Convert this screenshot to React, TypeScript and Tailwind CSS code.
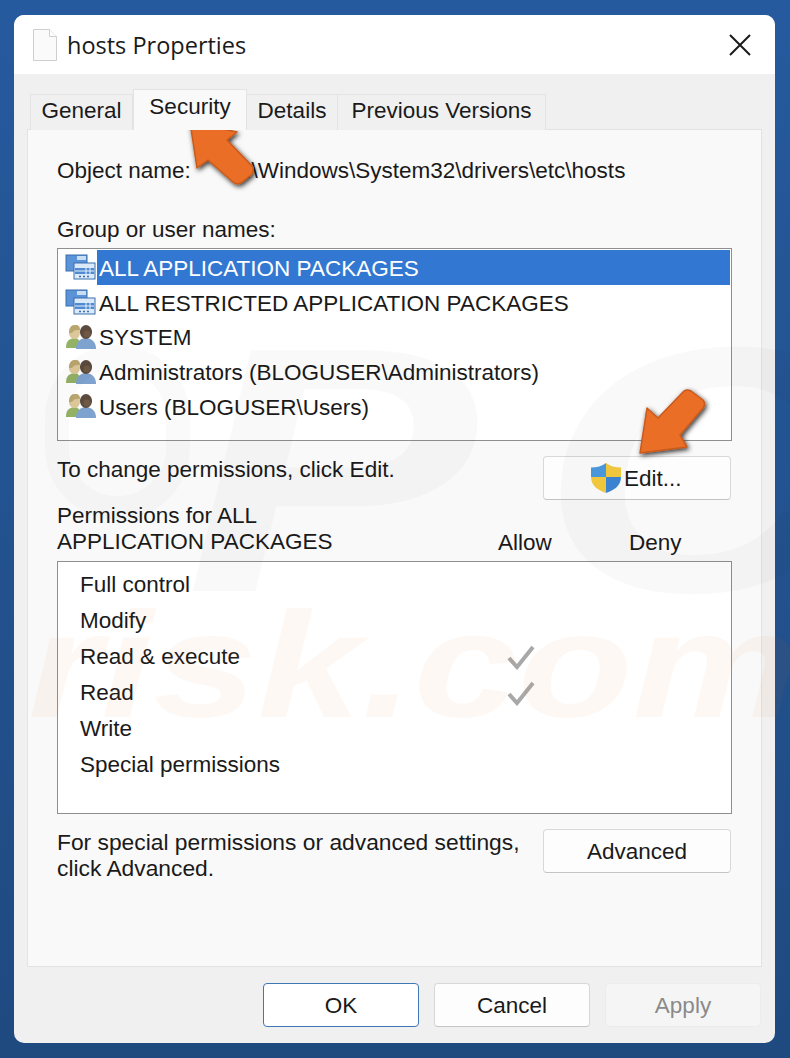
const principals = [
  { name: 'ALL APPLICATION PACKAGES', icon: 'package', selected: true },
  { name: 'ALL RESTRICTED APPLICATION PACKAGES', icon: 'package' },
  { name: 'SYSTEM', icon: 'users' },
  { name: 'Administrators (BLOGUSER\\Administrators)', icon: 'users' },
  { name: 'Users (BLOGUSER\\Users)', icon: 'users' },
];

const permissions = [
  { name: 'Full control' },
  { name: 'Modify' },
  { name: 'Read & execute', allowed: true },
  { name: 'Read', allowed: true },
  { name: 'Write' },
  { name: 'Special permissions' },
];

function PackageIcon() {
  return (
    <svg width="32" height="26" viewBox="0 0 32 26" className="shrink-0">
      <rect x="1" y="1" width="21" height="16" fill="#5b93d8" stroke="#3b6fae" />
      <rect x="12" y="2" width="9" height="4" fill="#c9def5" />
      <rect x="9" y="9" width="21" height="16" fill="#dbe9f8" stroke="#3b6fae" />
      <rect x="10" y="14" width="19" height="6" fill="#4f8ad2" />
      <path d="M21 14v6M25 14v6M10 17h19" stroke="#e8f1fb" strokeWidth="1" />
      <path d="M14 22.5h2M18 22.5h2M22 22.5h2" stroke="#3b6fae" strokeWidth="1.5" />
    </svg>
  );
}

function UsersIcon() {
  return (
    <svg width="32" height="26" viewBox="0 0 32 26" className="shrink-0">
      <path d="M1 24c0-6 2-9 8-10 5 0 6 3 6 10z" fill="#93b265" />
      <path d="M4 9c0-5 2-8 6-8s5 3 5 7-2 7-5 7-6-2-6-6z" fill="#dcc79a" />
      <path d="M4 9c0-5 2-8 6-8s5 2 5 5c-4 0-6 0-7 2-1 1-2 1-4 1z" fill="#b9a66f" />
      <path d="M11 25c0-6 3-10 9-11 7 0 11 4 11 11z" fill="#7ea3cf" />
      <path d="M15 8c0-4 3-7 6-7s6 3 6 7-3 7-6 7-6-3-6-7z" fill="#5c4a3c" />
      <circle cx="22" cy="10" r="3.5" fill="#6f5846" />
    </svg>
  );
}

function ShieldIcon() {
  return (
    <svg width="30" height="30" viewBox="0 0 30 30" className="shrink-0">
      <path d="M15 0C11 3 6 4.500 0 4.500V14h15z" fill="#4a9be0" />
      <path d="M15 0c4 3 9 4.500 15 4.500V14H15z" fill="#f5cb3e" />
      <path d="M0 14c0 8 6 13 15 16V14z" fill="#f5cb3e" />
      <path d="M30 14c0 8-6 13-15 16V14z" fill="#3d87d6" />
    </svg>
  );
}

export default function App() {
  return (
    <div className="relative h-[1058px] w-[790px] overflow-hidden bg-gradient-to-b from-[#265a9e] to-[#1f4a80] pl-[14px] pt-[15px] font-['Liberation_Sans',sans-serif] text-[22.5px] leading-[26px] text-[#1a1a1a]">
      <div className="flex h-[1028px] w-[761px] flex-col overflow-hidden rounded-[10px] bg-[#f0f0f0]">
        {/* Title bar */}
        <div className="flex h-[59px] shrink-0 items-center justify-between bg-white pl-[19px] pr-[24px]">
          <div className="flex items-center gap-[10px]">
            <svg width="24" height="32" viewBox="0 0 24 32">
              <path d="M.5.5h16l7 7v24H.5z" fill="#fafafa" stroke="#cfcfcf" />
              <path d="M16.500.5v7h7" fill="#fff" stroke="#cfcfcf" />
            </svg>
            <span className="font-['Open_Sans',sans-serif] text-[23.5px]">hosts Properties</span>
          </div>
          <svg width="22" height="22" viewBox="0 0 22 22">
            <path d="M1 1l20 20M21 1L1 21" stroke="#1a1a1a" strokeWidth="2" />
          </svg>
        </div>

        {/* Tabs */}
        <div className="relative z-10 flex h-[55px] shrink-0 items-end pl-[16px]">
          <div className="-mb-px flex h-[36px] w-[103px] items-start justify-center border border-b-0 border-[#e3e3e3] bg-[#f0f0f0] pt-[3px]">General</div>
          <div className="-mb-px flex h-[41px] w-[114px] items-start justify-center border border-b-0 border-[#e3e3e3] bg-[#f9f9f9] pt-[4px]">Security</div>
          <div className="-mb-px flex h-[36px] w-[91px] items-start justify-center border border-b-0 border-l-0 border-[#e3e3e3] bg-[#f0f0f0] pt-[3px]">Details</div>
          <div className="-mb-px flex h-[36px] w-[208px] items-start justify-center border border-b-0 border-l-0 border-[#e3e3e3] bg-[#f0f0f0] pt-[3px]">Previous Versions</div>
        </div>

        {/* Security page */}
        <div className="mx-[13px] h-[838px] shrink-0 border border-[#e3e3e3] bg-[#f9f9f9] pl-[29px] pr-[29px] pt-[28px]">
          <div className="flex h-[26px]">
            <span className="w-[172px]">Object name:</span>
            <span>C:\Windows\System32\drivers\etc\hosts</span>
          </div>
          <div className="mt-[33px]">Group or user names:</div>

          <div className="mt-[5px] h-[193px] border border-[#8f8f8f] bg-white px-[1px] pt-[1px]">
            {principals.map((p) => (
              <div key={p.name} className="flex h-[34.75px] items-center pl-[6px]">
                {p.icon === 'package' ? <PackageIcon /> : <UsersIcon />}
                <span className={`flex h-full flex-1 items-center pl-[2px] pt-[3px] ${p.selected ? 'bg-[#3278d2] text-white' : ''}`}>{p.name}</span>
              </div>
            ))}
          </div>

          <div className="mt-[15px] flex items-start justify-between pr-px">
            <span className="mt-[1px]">To change permissions, click Edit.</span>
            <button className="flex h-[44px] w-[188px] items-center justify-start rounded-[4px] border border-[#d8d8d8] border-b-[#c4c4c4] bg-[#fdfdfd] pl-[47px]">
              <ShieldIcon />
              <span className="ml-[3px] mt-[2px]">Edit...</span>
            </button>
          </div>

          <div className="mt-[3px] flex items-end">
            <div className="w-[441px]">Permissions for ALL<br />APPLICATION PACKAGES</div>
            <div className="-mb-px w-[131px]">Allow</div>
            <div className="-mb-px">Deny</div>
          </div>

          <div className="mt-[6px] h-[253px] border border-[#8f8f8f] bg-white pl-[22px] pt-[5px]">
            {permissions.map((perm) => (
              <div key={perm.name} className="flex h-[36px] items-center">
                <span className="w-[426px]">{perm.name}</span>
                {perm.allowed && (
                  <svg width="30" height="26" viewBox="0 0 30 26">
                    <path d="M3 14l8 9L27 3" fill="none" stroke="#a8a8a8" strokeWidth="4" />
                  </svg>
                )}
              </div>
            ))}
          </div>

          <div className="mt-[15px] flex items-start justify-between pr-px">
            <div className="text-[22.8px]">For special permissions or advanced settings,<br />click Advanced.</div>
            <button className="h-[44px] w-[188px] rounded-[4px] border border-[#d8d8d8] border-b-[#c4c4c4] bg-[#fdfdfd] pt-[2px]">Advanced</button>
          </div>
        </div>

        {/* Dialog buttons */}
        <div className="mt-[16px] flex justify-end gap-[15px] pr-[14px]">
          <button className="h-[44px] w-[156px] rounded-[4px] border border-[#3f76b5] bg-white pt-[2px]">OK</button>
          <button className="h-[44px] w-[156px] rounded-[4px] border border-[#d8d8d8] border-b-[#c4c4c4] bg-[#fdfdfd] pt-[2px]">Cancel</button>
          <button className="h-[44px] w-[156px] rounded-[4px] border border-[#ececec] bg-[#f5f5f5] pt-[2px] text-[#8a8a8a]">Apply</button>
        </div>
      </div>

      {/* Watermark */}
      <div className="pointer-events-none absolute left-[185px] top-[295px] origin-left scale-x-[1.25] text-[350px] font-bold italic leading-[350px] tracking-[50px] text-black/[0.025]">PC</div>
      <div className="pointer-events-none absolute left-[28px] top-[565px] origin-left scale-x-[1.25] text-[150px] font-bold italic leading-[200px] text-[#e8701f]/[0.05]">risk.com</div>
      <div className="pointer-events-none absolute left-[45px] top-[345px] h-[175px] w-[145px] rounded-full border-[24px] border-black/[0.02]" />

      {/* Tutorial arrows */}
      <svg width="790" height="1058" viewBox="0 0 790 1058" className="pointer-events-none absolute left-0 top-0">
        <defs>
          <filter id="arrowShadow" x="-30%" y="-30%" width="160%" height="160%">
            <feDropShadow dx="1.500" dy="2" stdDeviation="2.500" floodColor="#000" floodOpacity="0.8" />
          </filter>
        </defs>
        <g fill="#ea6e26" stroke="#c85a1c" strokeWidth="1.500" strokeLinejoin="round" filter="url(#arrowShadow)">
          <path d="M190 122L237 132L227 140L253 167Q254 172 251 175L241 183Q236 185 233 182L208 160L197 168Z" />
          <path d="M640 453L647 408L658 418L684 391Q687 389 691 391L703 400Q706 404 703 408L680 435L687 447Z" />
        </g>
      </svg>
    </div>
  );
}
